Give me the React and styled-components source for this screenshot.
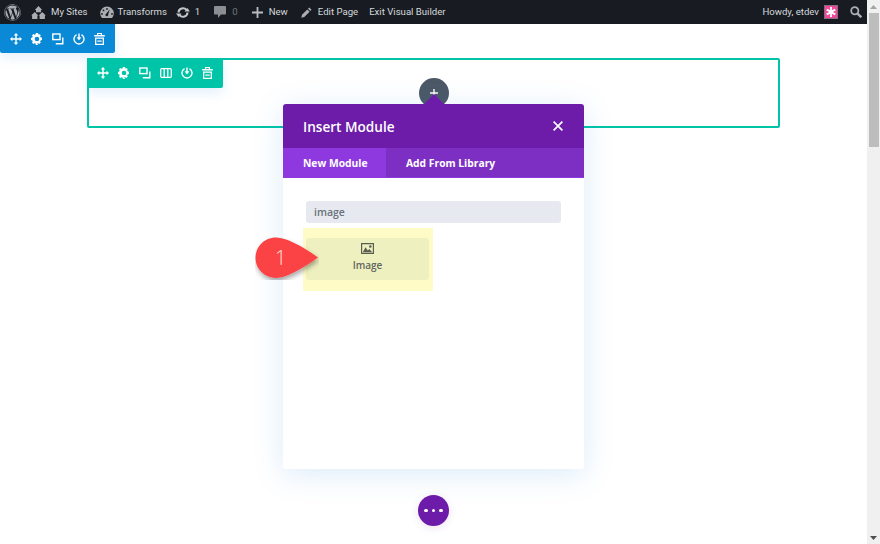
import React from "react";
import styled, { createGlobalStyle } from "styled-components";
import { FaWordpress } from "react-icons/fa";

const Global = createGlobalStyle`
  html, body { margin: 0; padding: 0; height: 100%; overflow: hidden; background: #fff; }
  #root { height: 544px; }
  * { box-sizing: border-box; }
  body { font-family: "Open Sans", "Liberation Sans", sans-serif; }
`;

const Page = styled.div`
  width: 880px; height: 544px; display: flex; overflow: hidden;
`;
const Main = styled.div`
  width: 867px; height: 544px; display: flex; flex-direction: column; position: relative;
`;
const AdminBar = styled.div`
  height: 24px; background: #181c22; display: flex; align-items: center; justify-content: space-between; padding: 0 5px 0 4px; flex: none;
`;
const BarGroup = styled.div`
  display: flex; align-items: center;
`;
const BarItem = styled.div`
  display: flex; align-items: center; gap: ${p => p.$gap ?? 5}px; margin-left: ${p => p.$ml ?? 0}px;
  font-family: Roboto, "Open Sans", sans-serif; font-size: 9.600px; color: #d5d9dc; white-space: nowrap; line-height: 24px;
  svg { display: block; flex: none; }
`;
const Count = styled.span`
  color: ${p => p.$dim ? "#6f757a" : "#d5d9dc"};
`;
const Avatar = styled.span`
  width: 14px; height: 14px; background: #f2499b; border: 1px solid #8b6b7c; display: flex; align-items: center; justify-content: center;
  margin-left: 5px;
`;
const Canvas = styled.div`
  flex: 1; position: relative; padding: 34px 87px 0;
`;
const Toolbar = styled.div`
  position: absolute; display: flex; align-items: center; height: ${p => p.$h}px; padding-left: ${p => p.$pl}px; gap: 9px;
  left: ${p => p.$x}px; top: ${p => p.$y}px; width: ${p => p.$w}px;
  background: ${p => p.$bg}; border-radius: 0 0 2px 2px;
  box-shadow: 0 5px 12px rgba(43, 135, 218, 0.12);
  svg { display: block; flex: none; }
`;
const RowOutline = styled.div`
  height: 70px; border: 2px solid #00c4a8; border-radius: 2px; width: 693px;
`;
const AddCircle = styled.div`
  position: absolute; left: 418.500px; top: 54px; width: 30px; height: 30px; border-radius: 50%; background: #4c5866;
  display: flex; justify-content: center; padding-top: 11px;
  svg { display: block; }
`;
const Modal = styled.div`
  position: absolute; left: 283px; top: 80px; width: 301px; height: 365px; background: #fff; border-radius: 3px;
  box-shadow: 0 5px 30px rgba(43, 135, 218, 0.17); display: flex; flex-direction: column;
`;
const Arrow = styled.div`
  position: absolute; left: 140.500px; top: -10px; width: 0; height: 0;
  border-left: 10px solid transparent; border-right: 10px solid transparent; border-bottom: 10px solid #6c1ca8;
`;
const ModalHead = styled.div`
  height: 44px; flex: none; background: #6c1ca8; border-radius: 3px 3px 0 0; display: flex; align-items: center; justify-content: space-between;
  padding: 0 21px 0 20px; color: #fff; font-size: 13.600px; font-weight: 600;
  svg { display: block; }
`;
const Tabs = styled.div`
  height: 30px; flex: none; background: #7d2fc4; display: flex; border-bottom: 1px solid #8e39df;
`;
const Tab = styled.div`
  height: 100%; width: ${p => p.$w}px; padding-left: 20px; display: flex; align-items: center; color: #fff; font-size: 10.300px; font-weight: 700;
  background: ${p => p.$active ? "#8e39df" : "transparent"};
`;
const ModalBody = styled.div`
  flex: 1; padding: 23px 23px 0 23px; display: flex; flex-direction: column; align-items: flex-start;
`;
const Search = styled.div`
  width: 255px; height: 22px; background: #e6eaf0; border-radius: 3px; color: #69727c; font-size: 10.500px; font-weight: 600; display: flex; align-items: center; padding-left: 8px;
`;
const Highlight = styled.div`
  margin: 5px 0 0 -3px; width: 130px; height: 63px; background: #fffbc6; padding: 10px 4px 11px 3px;
`;
const ModuleCard = styled.div`
  width: 123px; height: 42px; background: #eef0bf; border-radius: 3px; display: flex; flex-direction: column; align-items: center; color: #62675f; font-size: 10px; font-weight: 600;
  padding-top: 5px; gap: 4px; line-height: 14px;
  svg { display: block; flex: none; }
`;
const Marker = styled.div`
  position: absolute; left: 255px; top: 213px; width: 64px; height: 43px;
  svg { display: block; }
`;
const MarkerNum = styled.span`
  position: absolute; left: 20px; top: 7px; color: #ffe0da; font-size: 20px; font-weight: 300; line-height: 28px;
`;
const MoreButton = styled.div`
  position: absolute; left: 418px; top: 471px; width: 31px; height: 31px; border-radius: 50%; background: #6c1ca8;
  display: flex; align-items: center; justify-content: center; gap: 4px; box-shadow: 0 2px 8px rgba(108,28,168,.12);
`;
const Dot = styled.span`
  width: 3.400px; height: 3.400px; background: #fff; border-radius: 50%;
`;
const Scrollbar = styled.div`
  width: 13px; height: 544px; background: #f0f0f0; display: flex; flex-direction: column; flex: none;
`;
const ScrollBtn = styled.div`
  height: 13px; width: 100%; flex: none; display: flex; align-items: center; justify-content: center;
  svg { display: block; }
`;
const Thumb = styled.div`
  width: 10px; margin-left: 2px; height: 134px; background: #bdbdbd;
`;
const Spacer = styled.div`
  flex: 1;
`;

const Move = () => (
  <svg width="12" height="12" viewBox="0 0 13 13" fill="#fff">
    <path d="M6.500 0 9 2.600H7.300v3.100h3.100V4L13 6.500 10.400 9V7.300H7.300v3.100H9L6.500 13 4 10.400h1.700V7.300H2.600V9L0 6.500 2.600 4v1.700h3.100V2.600H4z" />
  </svg>
);
const Gear = () => (
  <svg width="12" height="12" viewBox="0 0 12 12">
    <path fill="#fff" fillRule="evenodd" d="M4.900 0h2.200l.3 1.600 1-.4 1.400.9-.7 1.200.5 1 1.400.4v2.200l-1.400.5-.5 1 .7 1.200-1.500 1.400-1.200-.8-1 .4L7.100 12H4.900l-.3-1.400-1-.4-1.200.8L1 9.600l.7-1.200-.4-1L0 7.100V4.900l1.300-.4.400-1L1 2.400 2.400 1l1.200.7 1-.4zM6 3.700a2.300 2.300 0 1 0 0 4.600 2.300 2.300 0 0 0 0-4.600z" />
  </svg>
);
const Clone = () => (
  <svg width="12" height="12" viewBox="0 0 12 12" fill="none" stroke="#fff" strokeWidth="1.400">
    <rect x="0.800" y="1" width="7.200" height="5.600" />
    <path d="M10.800 4.500V10.800H3.800" />
  </svg>
);
const Columns = () => (
  <svg width="12" height="12" viewBox="0 0 12 12" fill="none" stroke="#fff" strokeWidth="1.300">
    <rect x="0.700" y="1.700" width="10.600" height="8.600" rx="1" />
    <path d="M4.200 2v8M7.800 2v8" />
  </svg>
);
const Power = () => (
  <svg width="12" height="12" viewBox="0 0 12 12" fill="none" stroke="#fff" strokeWidth="1.400">
    <path d="M3.500 1.600a5 5 0 1 0 5 0" />
    <path d="M6 0.500v5" />
    <path d="M4.200 4.600 6 7l1.800-2.400z" fill="#fff" strokeWidth=".6" />
  </svg>
);
const Trash = () => (
  <svg width="11" height="12" viewBox="0 0 11 12" fill="#fff">
    <path d="M3 0h5v2h2.800v1.500H.2V2H3zM4.200 1.100V2h2.600v-.9z" fillRule="evenodd" />
    <path d="M1 4.500h9V12H1zM2.300 5.800V10.700h6.400V5.800z" fillRule="evenodd" />
    <path d="M3.300 7.500h4.400v1.200H3.300z" />
  </svg>
);
const Sites = () => (
  <svg width="15" height="13" viewBox="0 0 15 13" fill="#a9aeb2">
    <path d="M7.500 0 11.200 4H10v2.200H5V4H3.800zM3.800 6 7.300 9.600H6.400V13H1.100V9.600H.2zM11.200 6 14.800 9.600h-.9V13H8.600V9.600H7.700z" />
  </svg>
);
const Gauge = () => (
  <svg width="14" height="13" viewBox="0 0 14 13">
    <path fill="#a9aeb2" fillRule="evenodd" d="M7 .5a6.800 6.800 0 0 1 6.800 6.800c0 1.800-.7 3.500-1.800 4.700H2A6.800 6.800 0 0 1 .2 7.300 6.800 6.800 0 0 1 7 .5zM7 2a.9.9 0 1 0 0 1.800A.9.9 0 0 0 7 2zM3.500 3.500a.9.9 0 1 0 0 1.800.9.9 0 0 0 0-1.800zM2 7a.9.900 0 1 0 0 1.800A.9.900 0 0 0 2 7zM12 7a.9.900 0 1 0 0 1.800.9.900 0 0 0 0-1.800zM9.800 3.300 6.400 7.600a1.400 1.400 0 1 0 1.800 1z" />
  </svg>
);
const Updates = () => (
  <svg width="14" height="11" viewBox="0 0 14 11" fill="none">
    <path stroke="#c4c8cb" strokeWidth="2" d="M2.500 5.500a4.500 4.300 0 0 1 8-2.600M11.500 5.500a4.500 4.300 0 0 1-8 2.600" />
    <path fill="#c4c8cb" d="M8.500 4.500h5.500L11.300 1zM5.500 6.500H0L2.700 10z" />
  </svg>
);
const Bubble = () => (
  <svg width="12" height="12" viewBox="0 0 12 12" fill="#8a8f93">
    <path d="M1 0h10a1 1 0 0 1 1 1v6.500a1 1 0 0 1-1 1H7L4 12V8.500H1a1 1 0 0 1-1-1V1a1 1 0 0 1 1-1z" />
  </svg>
);
const Plus = () => (
  <svg width="11" height="11" viewBox="0 0 11 11" fill="#b9bdc1">
    <path d="M4.600 0h1.800v4.600H11v1.800H6.400V11H4.600V6.400H0V4.600h4.600z" />
  </svg>
);
const SmallPlus = () => (
  <svg width="8" height="8" viewBox="0 0 8 8" fill="#fff">
    <path d="M3.300 0h1.400v3.300H8v1.400H4.700V8H3.300V4.700H0V3.300h3.300z" />
  </svg>
);
const Pencil = () => (
  <svg width="11" height="11" viewBox="0 0 11 11" fill="#a9aeb2">
    <path d="M8.300.6 10.500 2.800 9.300 4 7 1.800zM6.300 2.500 8.600 4.800 3.300 10 0.300 10.800 1 7.800z" />
  </svg>
);
const SearchIcon = () => (
  <svg width="12" height="12" viewBox="0 0 12 12" fill="none" stroke="#a9aeb2">
    <circle cx="4.800" cy="4.800" r="3.600" strokeWidth="1.800" />
    <path d="M7.600 7.600 11.300 11.300" strokeWidth="2.400" />
  </svg>
);
const Star = () => (
  <svg width="10" height="10" viewBox="0 0 10 10" fill="#fff">
    <path d="M4 0h2l-.2 3.300L8.800 1.700 9.800 3.400 6.800 5l3 1.600-1 1.700-3-1.600L6 10H4l.2-3.300-3 1.600-1-1.700 3-1.600-3-1.600 1-1.700 3 1.600z" />
  </svg>
);
const Close = () => (
  <svg width="10" height="10" viewBox="0 0 10 10" stroke="#fff" strokeWidth="1.700">
    <path d="M.6.6 9.400 9.400M9.400.6.6 9.400" />
  </svg>
);
const ImageIcon = () => (
  <svg width="13" height="11" viewBox="0 0 13 11">
    <path fill="#5a5f52" fillRule="evenodd" d="M0 0h13v11H0zM1.200 1.200v8.600h10.600V1.200z" />
    <circle cx="9.300" cy="3.500" r="1.300" fill="#5a5f52" />
    <path fill="#5a5f52" d="M1.800 9.200 4.500 4.200 6.800 7.500 8.300 6 11.200 9.200z" />
  </svg>
);
const Caret = ({ down }) => (
  <svg width="7" height="4" viewBox="0 0 7 4" fill={down ? "#505050" : "#a3a3a3"}>
    <path d={down ? "M0 0h7L3.500 4z" : "M3.500 0 7 4H0z"} />
  </svg>
);

export default function App() {
  return (
    <Page>
      <Global />
      <Main>
        <AdminBar>
          <BarGroup>
            <BarItem><FaWordpress size={17} color="#a9aeb2" /></BarItem>
            <BarItem $ml={10}><Sites />My Sites</BarItem>
            <BarItem $ml={12} $gap={4}><Gauge />Transforms</BarItem>
            <BarItem $ml={9} $gap={5}><Updates /><Count>1</Count></BarItem>
            <BarItem $ml={14} $gap={6}><Bubble /><Count $dim>0</Count></BarItem>
            <BarItem $ml={14} $gap={6}><Plus />New</BarItem>
            <BarItem $ml={13} $gap={6}><Pencil />Edit Page</BarItem>
            <BarItem $ml={11}>Exit Visual Builder</BarItem>
          </BarGroup>
          <BarGroup>
            <BarItem $gap={0}>Howdy, etdev<Avatar><Star /></Avatar></BarItem>
            <BarItem $ml={12}><SearchIcon /></BarItem>
          </BarGroup>
        </AdminBar>
        <Canvas>
          <RowOutline />
          <Toolbar $x={0} $y={0} $w={115} $h={29} $pl={10} $bg="#0a8ad6">
            <Move /><Gear /><Clone /><Power /><Trash />
          </Toolbar>
          <Toolbar $x={87} $y={34} $w={136} $h={30} $pl={10} $bg="#00c4a8">
            <Move /><Gear /><Clone /><Columns /><Power /><Trash />
          </Toolbar>
          <AddCircle><SmallPlus /></AddCircle>
          <Modal>
            <Arrow />
            <ModalHead>Insert Module<Close /></ModalHead>
            <Tabs>
              <Tab $active $w={103}>New Module</Tab>
              <Tab $w={198}>Add From Library</Tab>
            </Tabs>
            <ModalBody>
              <Search>image</Search>
              <Highlight>
                <ModuleCard><ImageIcon />Image</ModuleCard>
              </Highlight>
            </ModalBody>
          </Modal>
          <Marker>
            <svg width="64" height="43" viewBox="0 0 64 43">
              <defs>
                <filter id="mshadow" x="-20%" y="-20%" width="150%" height="160%">
                  <feDropShadow dx="1" dy="3" stdDeviation="2.500" floodColor="#000" floodOpacity=".35" />
                </filter>
              </defs>
              <path filter="url(#mshadow)" fill="#fb4245" d="M21 0.500C31 0.500 47 9 63 20.500 47 32 31 41 21 41 9.500 41 .500 32 .500 20.800 .500 9.500 9.500.500 21 .500z" />
            </svg>
            <MarkerNum>1</MarkerNum>
          </Marker>
          <MoreButton><Dot /><Dot /><Dot /></MoreButton>
        </Canvas>
      </Main>
      <Scrollbar>
        <ScrollBtn><Caret /></ScrollBtn>
        <Thumb />
        <Spacer />
        <ScrollBtn><Caret down /></ScrollBtn>
      </Scrollbar>
    </Page>
  );
}
